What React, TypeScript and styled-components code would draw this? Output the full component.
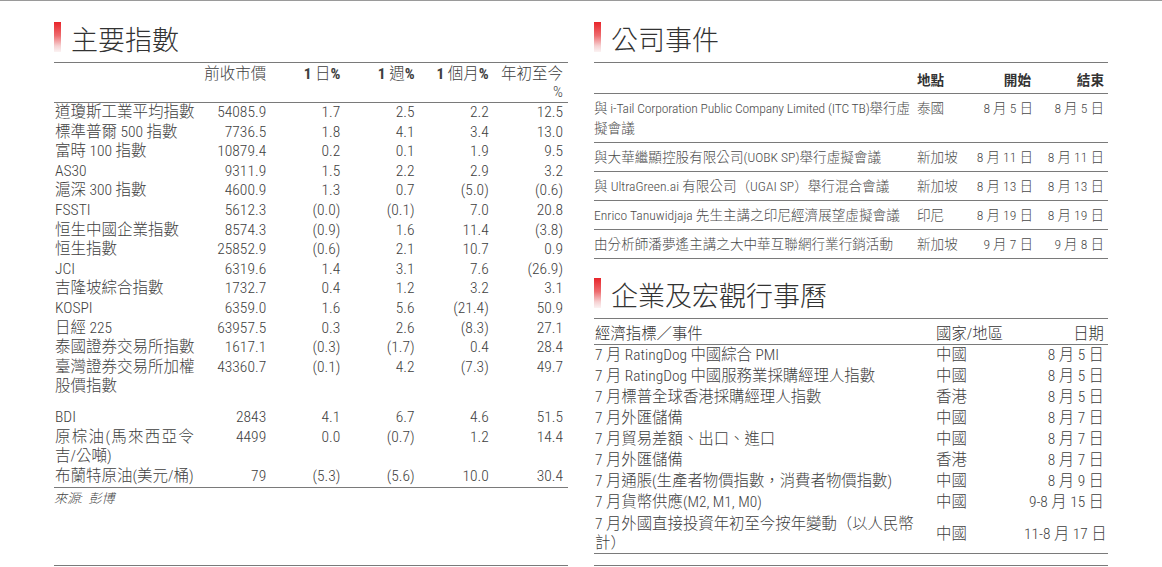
import React from "react";
import styled, { createGlobalStyle } from "styled-components";

const Global = createGlobalStyle`
  html, body { margin: 0; padding: 0; background: #fff; }
  body {
    font-family: "Liberation Sans Narrow", "Arial Narrow", "Roboto Condensed", "Noto Sans CJK TC", sans-serif;
    font-stretch: condensed;
    font-weight: 300;
    color: #3e3e3e;
  }
`;

const Page = styled.div`
  width: 1162px;
  height: 567px;
  box-sizing: border-box;
  border-top: 1px solid #9a9a9a;
  display: grid;
  grid-template-columns: 514px 514px;
  column-gap: 26px;
  padding-left: 54px;
`;

const Column = styled.section`
  display: flex;
  flex-direction: column;
  border-bottom: 1px solid #7a7a7a;
  margin-bottom: 1px;
`;

const TitleRow = styled.div<{ $top: number }>`
  display: flex;
  align-items: center;
  gap: 10px;
  padding-top: ${(p) => p.$top}px;
  padding-bottom: 8px;
  border-bottom: 1px solid #7a7a7a;
`;

const RedBar = styled.span`
  width: 7px;
  height: 30px;
  background: linear-gradient(#e8242a 0%, #ee6b6e 45%, #f6d2d3 80%, #fbf3f3 100%);
`;

const TitleText = styled.h2`
  margin: 0;
  padding-top: 4px;
  font-family: "Noto Sans CJK TC", sans-serif;
  font-weight: 300;
  font-size: 27px;
  line-height: 30px;
  color: #333;
`;

/* ---------- left: indices ---------- */

const IndexTable = styled.table`
  width: 100%;
  border-collapse: collapse;
  table-layout: fixed;
  font-size: 15.5px;
  line-height: 19.6px;
`;

const HeadCell = styled.th<{ $left?: boolean }>`
  font-weight: 300;
  text-align: ${(p) => (p.$left ? "left" : "right")};
  vertical-align: top;
  padding: 2px 5px 1px 0;
  line-height: 18px;
  border-bottom: 1px solid #7a7a7a;
`;

const Num = styled.b`
  font-weight: 700;
`;

const Label = styled.td`
  padding: 0 0 0 1px;
  vertical-align: top;
`;

const Spread = styled.span`
  letter-spacing: 1.3px;
  white-space: nowrap;
`;

const Value = styled.td`
  padding: 0 5px 0 0;
  text-align: right;
  vertical-align: top;
`;

const GapRow = styled.tr`
  height: 11px;
`;

const LastRow = styled.tr`
  border-bottom: 1px solid #7a7a7a;
  td { padding-bottom: 1px; }
`;

const Source = styled.div`
  font-style: italic;
  font-size: 13px;
  line-height: 18px;
  padding-top: 2px;
  color: #444;
`;

/* ---------- right: company events ---------- */

const EventTable = styled.table`
  width: 100%;
  border-collapse: collapse;
  table-layout: fixed;
  font-size: 13.6px;
  line-height: 20px;
`;

const EventHead = styled.th<{ $align: string }>`
  text-align: ${(p) => p.$align};
  font-weight: 700;
  padding: 7px 4px 3px 0;
  border-bottom: 1px solid #7a7a7a;
  color: #333;
`;

const EventRow = styled.tr`
  border-bottom: 1px solid #7a7a7a;
`;

const EventCell = styled.td<{ $align?: string; $pr?: number }>`
  text-align: ${(p) => p.$align || "left"};
  vertical-align: top;
  padding: 4px ${(p) => p.$pr ?? 4}px 4px 0;
  color: #4a4a4a;
  white-space: nowrap;
`;

const Tight = styled.span`
  letter-spacing: -0.15px;
`;

/* ---------- right: calendar ---------- */

const CalTable = styled.table`
  width: 100%;
  border-collapse: collapse;
  table-layout: fixed;
  font-size: 15.4px;
  line-height: 21px;
`;

const CalHead = styled.th<{ $align: string }>`
  text-align: ${(p) => p.$align};
  font-weight: 300;
  padding: 5px 4px 0 1px;
  line-height: 20px;
  border-bottom: 1px solid #7a7a7a;
  color: #333;
`;

const CalCell = styled.td<{ $align?: string }>`
  text-align: ${(p) => p.$align || "left"};
  vertical-align: middle;
  padding: 0 4px 0 1px;
  white-space: nowrap;
`;

const CalLast = styled.tr`
  border-bottom: 1px solid #7a7a7a;
  td { padding-top: 2px; padding-bottom: 0; line-height: 19px; }
`;

type Row = { name: React.ReactNode; v: string[] };

const indexRows: Row[] = [
  { name: "道瓊斯工業平均指數", v: ["54085.9", "1.7", "2.5", "2.2", "12.5"] },
  { name: "標準普爾 500 指數", v: ["7736.5", "1.8", "4.1", "3.4", "13.0"] },
  { name: "富時 100 指數", v: ["10879.4", "0.2", "0.1", "1.9", "9.5"] },
  { name: "AS30", v: ["9311.9", "1.5", "2.2", "2.9", "3.2"] },
  { name: "滬深 300 指數", v: ["4600.9", "1.3", "0.7", "(5.0)", "(0.6)"] },
  { name: "FSSTI", v: ["5612.3", "(0.0)", "(0.1)", "7.0", "20.8"] },
  { name: "恒生中國企業指數", v: ["8574.3", "(0.9)", "1.6", "11.4", "(3.8)"] },
  { name: "恒生指數", v: ["25852.9", "(0.6)", "2.1", "10.7", "0.9"] },
  { name: "JCI", v: ["6319.6", "1.4", "3.1", "7.6", "(26.9)"] },
  { name: "吉隆坡綜合指數", v: ["1732.7", "0.4", "1.2", "3.2", "3.1"] },
  { name: "KOSPI", v: ["6359.0", "1.6", "5.6", "(21.4)", "50.9"] },
  { name: "日經 225", v: ["63957.5", "0.3", "2.6", "(8.3)", "27.1"] },
  { name: "泰國證券交易所指數", v: ["1617.1", "(0.3)", "(1.7)", "0.4", "28.4"] },
  {
    name: (
      <>
        臺灣證券交易所加權
        <br />
        股價指數
      </>
    ),
    v: ["43360.7", "(0.1)", "4.2", "(7.3)", "49.7"],
  },
];

const commodityRows: Row[] = [
  { name: "BDI", v: ["2843", "4.1", "6.7", "4.6", "51.5"] },
  {
    name: (
      <>
        <Spread>原棕油(馬來西亞令</Spread>
        <br />
        吉/公噸)
      </>
    ),
    v: ["4499", "0.0", "(0.7)", "1.2", "14.4"],
  },
];

const lastRow: Row = { name: "布蘭特原油(美元/桶)", v: ["79", "(5.3)", "(5.6)", "10.0", "30.4"] };

const events: { e: React.ReactNode; p: string; s: string; t: string }[] = [
  {
    e: (
      <>
        <Tight>與 i-Tail Corporation Public Company Limited (ITC TB)舉行虛</Tight>
        <br />
        擬會議
      </>
    ),
    p: "泰國",
    s: "8 月 5 日",
    t: "8 月 5 日",
  },
  { e: "與大華繼顯控股有限公司(UOBK SP)舉行虛擬會議", p: "新加坡", s: "8 月 11 日", t: "8 月 11 日" },
  { e: "與 UltraGreen.ai 有限公司（UGAI SP）舉行混合會議", p: "新加坡", s: "8 月 13 日", t: "8 月 13 日" },
  { e: "Enrico Tanuwidjaja 先生主講之印尼經濟展望虛擬會議", p: "印尼", s: "8 月 19 日", t: "8 月 19 日" },
  { e: "由分析師潘夢遙主講之大中華互聯網行業行銷活動", p: "新加坡", s: "9 月 7 日", t: "9 月 8 日" },
];

const calendar = [
  { e: "7 月 RatingDog 中國綜合 PMI", c: "中國", d: "8 月 5 日" },
  { e: "7 月 RatingDog 中國服務業採購經理人指數", c: "中國", d: "8 月 5 日" },
  { e: "7 月標普全球香港採購經理人指數", c: "香港", d: "8 月 5 日" },
  { e: "7 月外匯儲備", c: "中國", d: "8 月 7 日" },
  { e: "7 月貿易差額、出口、進口", c: "中國", d: "8 月 7 日" },
  { e: "7 月外匯儲備", c: "香港", d: "8 月 7 日" },
  { e: "7 月通脹(生產者物價指數，消費者物價指數)", c: "中國", d: "8 月 9 日" },
  { e: "7 月貨幣供應(M2, M1, M0)", c: "中國", d: "9-8 月 15 日" },
];

function SectionTitle({ text, top }: { text: string; top: number }) {
  return (
    <TitleRow $top={top}>
      <RedBar />
      <TitleText>{text}</TitleText>
    </TitleRow>
  );
}

function IndexRow({ r }: { r: Row }) {
  return (
    <tr>
      <Label>{r.name}</Label>
      {r.v.map((x, i) => (
        <Value key={i}>{x}</Value>
      ))}
    </tr>
  );
}

export default function App() {
  return (
    <>
      <Global />
      <Page>
        <Column>
          <SectionTitle text="主要指數" top={19} />
          <IndexTable>
            <colgroup>
              <col style={{ width: 143 }} />
              <col />
              <col />
              <col />
              <col />
              <col />
            </colgroup>
            <thead>
              <tr>
                <HeadCell $left />
                <HeadCell>前收市價</HeadCell>
                <HeadCell>
                  <Num>1</Num> 日<Num>%</Num>
                </HeadCell>
                <HeadCell>
                  <Num>1</Num> 週<Num>%</Num>
                </HeadCell>
                <HeadCell>
                  <Num>1</Num> 個月<Num>%</Num>
                </HeadCell>
                <HeadCell>
                  年初至今
                  <br />%
                </HeadCell>
              </tr>
            </thead>
            <tbody>
              {indexRows.map((r, i) => (
                <IndexRow key={i} r={r} />
              ))}
              <GapRow>
                <td colSpan={6} />
              </GapRow>
              {commodityRows.map((r, i) => (
                <IndexRow key={i} r={r} />
              ))}
              <LastRow>
                <Label>{lastRow.name}</Label>
                {lastRow.v.map((x, i) => (
                  <Value key={i}>{x}</Value>
                ))}
              </LastRow>
            </tbody>
          </IndexTable>
          <Source>來源: &nbsp;彭博</Source>
        </Column>

        <Column>
          <SectionTitle text="公司事件" top={19} />
          <EventTable>
            <colgroup>
              <col style={{ width: 323 }} />
              <col style={{ width: 49 }} />
              <col style={{ width: 69 }} />
              <col />
            </colgroup>
            <thead>
              <tr>
                <EventHead $align="left" />
                <EventHead $align="left">地點</EventHead>
                <EventHead $align="right">開始</EventHead>
                <EventHead $align="right">結束</EventHead>
              </tr>
            </thead>
            <tbody>
              {events.map((ev, i) => (
                <EventRow key={i}>
                  <EventCell $pr={0}>{ev.e}</EventCell>
                  <EventCell>{ev.p}</EventCell>
                  <EventCell $align="right" $pr={2}>
                    {ev.s}
                  </EventCell>
                  <EventCell $align="right">{ev.t}</EventCell>
                </EventRow>
              ))}
            </tbody>
          </EventTable>

          <SectionTitle text="企業及宏觀行事曆" top={17} />
          <CalTable>
            <colgroup>
              <col style={{ width: 341 }} />
              <col style={{ width: 88 }} />
              <col />
            </colgroup>
            <thead>
              <tr>
                <CalHead $align="left">經濟指標／事件</CalHead>
                <CalHead $align="left">國家/地區</CalHead>
                <CalHead $align="right">日期</CalHead>
              </tr>
            </thead>
            <tbody>
              {calendar.map((c, i) => (
                <tr key={i}>
                  <CalCell>{c.e}</CalCell>
                  <CalCell>{c.c}</CalCell>
                  <CalCell $align="right">{c.d}</CalCell>
                </tr>
              ))}
              <CalLast>
                <CalCell>
                  7 月外國直接投資年初至今按年變動（以人民幣
                  <br />
                  計）
                </CalCell>
                <CalCell>中國</CalCell>
                <CalCell $align="right">11-8 月 17 日</CalCell>
              </CalLast>
            </tbody>
          </CalTable>
        </Column>
      </Page>
    </>
  );
}
